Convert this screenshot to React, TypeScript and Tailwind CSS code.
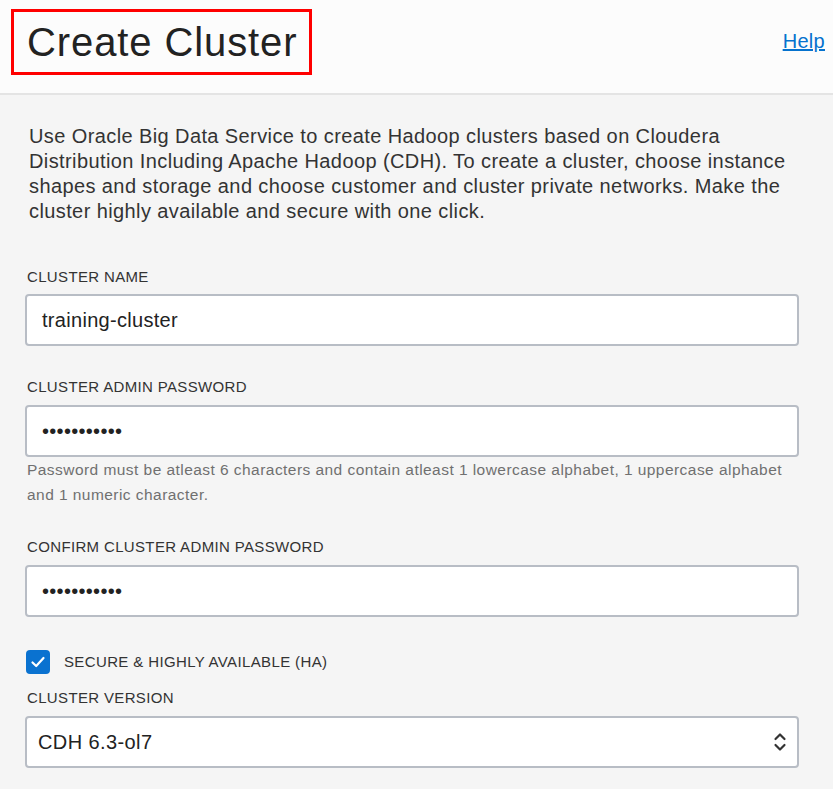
import React from "react";

const font = { fontFamily: '"Liberation Sans", Arial, sans-serif' };

const Label = ({ children }: { children: React.ReactNode }) => (
  <div className="text-[15px] leading-[20px] tracking-[0.35px] text-[#333333] uppercase">{children}</div>
);

const Field = ({ value, password }: { value: string; password?: boolean }) => (
  <div className="h-[52px] w-[774px] rounded-[4px] border-2 border-[#b8bdc5] bg-white flex items-center px-[15px]">
    {password ? (
      <span className="text-[20px] tracking-[0.3px] text-[#222]">{"•".repeat(11)}</span>
    ) : (
      <span className="text-[20px] tracking-[0.3px] text-[#222]">{value}</span>
    )}
  </div>
);

export default function App() {
  return (
    <div className="w-[833px] h-[789px] overflow-hidden bg-[#f5f5f5]" style={font}>
      <div className="h-[93px] bg-[#fcfcfc] flex items-start justify-between">
        <div className="mt-[9px] ml-[11px] h-[66px] w-[301px] border-[3px] border-[#ff0000] flex items-center pl-[13px]">
          <h1 className="text-[40px] leading-none tracking-[0.9px] text-[#222]">Create Cluster</h1>
        </div>
        <a className="mt-[26px] mr-[8px] text-[20px] tracking-[0.3px] text-[#0572ce] underline">Help</a>
      </div>
      <div className="h-[2px] bg-[#e4e4e4]" />
      <div className="pl-[25px] pt-[29px]">
        <p className="pl-[4px] w-[780px] text-[20px] leading-[25px] tracking-[0.4px] text-[#333333]">
          Use Oracle Big Data Service to create Hadoop clusters based on Cloudera Distribution Including Apache Hadoop (CDH). To create a cluster, choose instance shapes and storage and choose customer and cluster private networks. Make the cluster highly available and secure with one click.
        </p>
        <div className="mt-[43px] pl-[2px]">
          <Label>Cluster Name</Label>
        </div>
        <div className="mt-[7px]">
          <Field value="training-cluster" />
        </div>
        <div className="mt-[31px] pl-[2px]">
          <Label>Cluster Admin Password</Label>
        </div>
        <div className="mt-[8px]">
          <Field value="" password />
        </div>
        <p className="pl-[2px] w-[775px] text-[15.5px] leading-[25px] tracking-[0.45px] text-[#707070]">
          Password must be atleast 6 characters and contain atleast 1 lowercase alphabet, 1 uppercase alphabet and 1 numeric character.
        </p>
        <div className="mt-[30px] pl-[2px]">
          <Label>Confirm Cluster Admin Password</Label>
        </div>
        <div className="mt-[8px]">
          <Field value="" password />
        </div>
        <div className="mt-[33px] flex items-center">
          <div className="ml-[1px] h-[24px] w-[24px] rounded-[4px] bg-[#0a72d0] flex items-center justify-center">
            <svg width="16" height="16" viewBox="0 0 16 16" fill="none">
              <path d="M2.5 8.5 L6.2 12 L13.5 4" stroke="white" strokeWidth="2.2" strokeLinecap="round" strokeLinejoin="round" />
            </svg>
          </div>
          <span className="ml-[14px] text-[15px] tracking-[0.37px] text-[#333333]">SECURE &amp; HIGHLY AVAILABLE (HA)</span>
        </div>
        <div className="mt-[14px] pl-[2px]">
          <Label>Cluster Version</Label>
        </div>
        <div className="mt-[8px] h-[52px] w-[774px] rounded-[4px] border-2 border-[#b8bdc5] bg-white flex items-center justify-between pl-[11px] pr-[10px]">
          <span className="text-[20px] tracking-[0.4px] text-[#222]">CDH 6.3-ol7</span>
          <svg width="14" height="22" viewBox="0 0 14 22" fill="none">
            <path d="M2.5 8 L7 3.5 L11.5 8" stroke="#333" strokeWidth="2.2" strokeLinecap="round" strokeLinejoin="round" />
            <path d="M2.5 14 L7 18.5 L11.5 14" stroke="#333" strokeWidth="2.2" strokeLinecap="round" strokeLinejoin="round" />
          </svg>
        </div>
      </div>
    </div>
  );
}
